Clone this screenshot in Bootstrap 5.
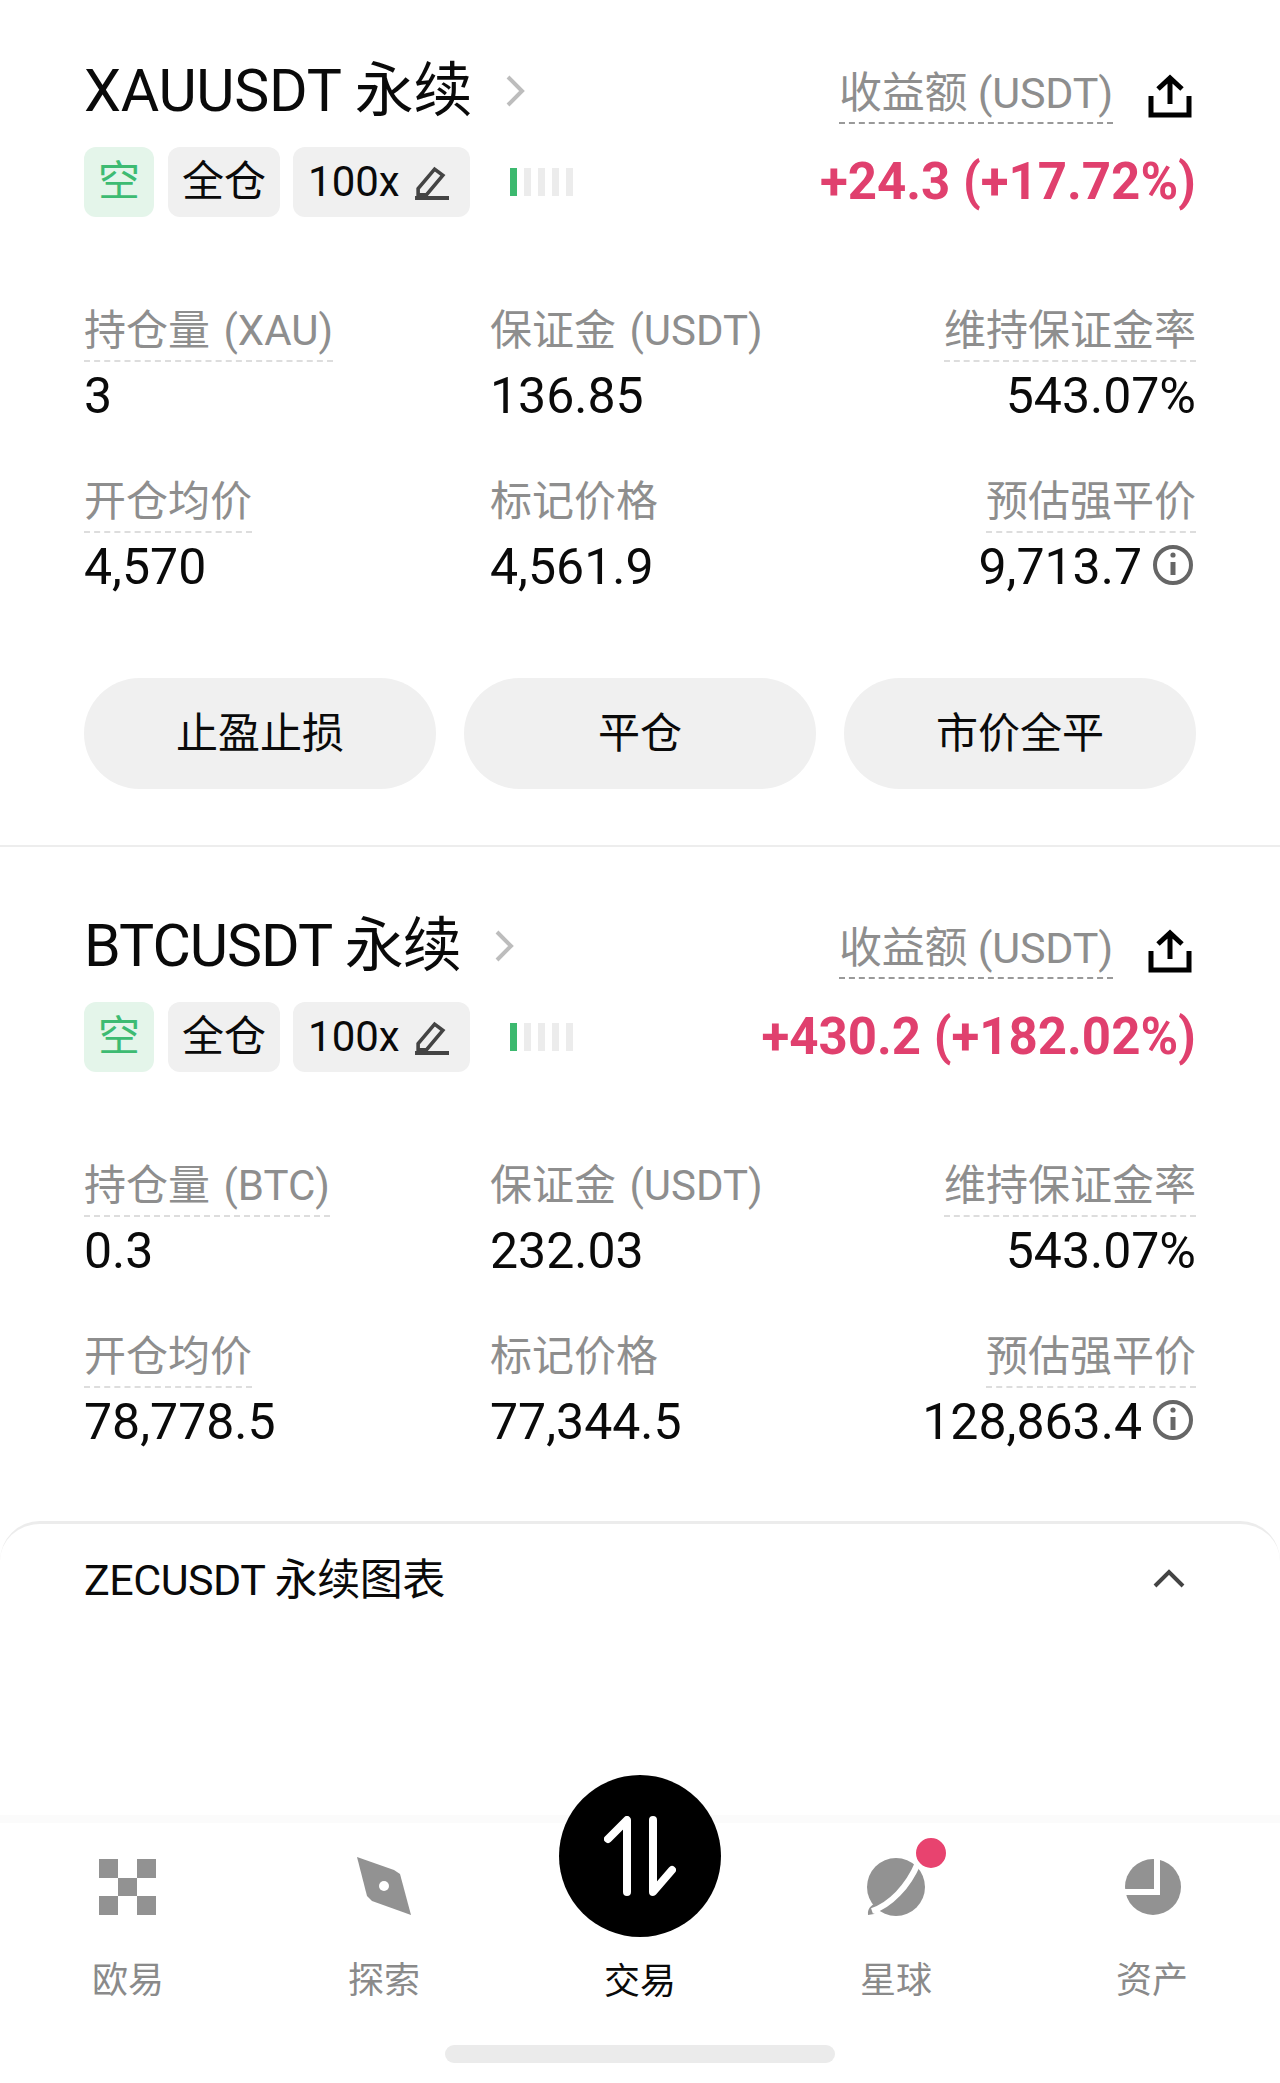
<!DOCTYPE html>
<html lang="zh-CN">
<head>
    <meta charset="UTF-8">
    <meta name="viewport" content="width=device-width, initial-scale=1.0">
    <title>持仓</title>
    <link href="https://cdn.jsdelivr.net/npm/bootstrap@5.3.0/dist/css/bootstrap.min.css" rel="stylesheet">
    <style>
        body { width: 1280px; height: 2083px; overflow: hidden; color: #0a0a0a; font-family: Roboto, "Noto Sans CJK SC", sans-serif; }
        .page { height: 2083px; }
        .pos-section { padding: 0 84px; }
        .pos-first { padding-top: 57px; height: 847px; border-bottom: 2px solid #ededed; }
        .pos-second { padding-top: 65px; height: 674px; }
        .pos-second .pos-title { letter-spacing: -1px; }
        .pos-head { height: 68px; }
        .pos-title { font-size: 59px; line-height: 68px; margin: 0; font-weight: 400; letter-spacing: -.3px; }
        .pos-arrow { width: 20px; height: 34px; margin-left: 33px; }
        .pnl-label { font-size: 43px; line-height: 52px; color: #8e8e8e; border-bottom: 2px dashed #999; height: 57px; margin-top: 10px; letter-spacing: -.2px; }
        .share-icon { width: 44px; height: 44px; margin-top: 17px; margin-left: 35px; margin-right: 4px; }
        .chip-row { margin-top: 22px; height: 70px; }
        .chip { height: 70px; border-radius: 12px; background: #f0f0f0; font-size: 42px; line-height: 70px; padding: 0 14px; margin-right: 13px; }
        .chip-short { background: #e4f5ea; color: #3dbb72; margin-right: 14px; }
        .chip-lev { padding-left: 15px; padding-right: 21px; }
        .pen-icon { width: 35px; height: 35px; margin-left: 14px; }
        .lev-bars { margin-left: 27px; gap: 7px; }
        .lev-bars i { display: block; width: 7px; height: 28px; background: #ececec; }
        .lev-bars i:first-child { background: #3cb96f; }
        .pnl-value { font-size: 51px; line-height: 70px; font-weight: 700; color: #e0406e; }
        .stat-grid { display: grid; grid-template-columns: 406px 1fr auto; margin-top: 89px; row-gap: 50px; }
        .stat-label, .stat-label-plain { display: inline-block; font-size: 42px; line-height: 50px; height: 56px; color: #8e8e8e; word-spacing: 3px; }
        .stat-label { border-bottom: 2px dashed #ddd; }
        .stat-value { font-size: 50px; line-height: 62px; margin-top: 3px; }
        .info-icon { width: 42px; height: 42px; margin-left: 10px; vertical-align: -2px; margin-right: 2px; }
        .action-row { margin-top: 80px; gap: 28px; }
        .action-btn { flex: 1; height: 111px; border-radius: 56px; background: #f0f0f0; border: 0; font-size: 42px; color: #0a0a0a; }
        .chart-sheet { height: 294px; border-top: 3px solid #ececec; border-radius: 40px 40px 0 0; padding: 28px 84px 0; }
        .chart-title { font-size: 43px; line-height: 56px; margin: 0; font-weight: 400; letter-spacing: -.5px; }
        .chart-chevron { width: 34px; height: 20px; margin-right: 10px; }
        .tab-bar { height: 267px; border-top: 8px solid #fbfbfb; padding-top: 33px; }
        .tab-item { width: 256px; height: 154px; padding-top: 1px; color: #8a8a8a; font-size: 36px; line-height: 44px; }
        .tab-item svg { width: 60px; height: 60px; margin-bottom: 42px; display: block; }
        .tab-item .planet { overflow: visible; }
        .tab-active { color: #0a0a0a; justify-content: flex-end; height: 148px; }
        .trade-fab { position: absolute; left: 559px; top: 1775px; width: 162px; height: 162px; border-radius: 50%; background: #000; }
        .home-bar { position: absolute; left: 445px; top: 2045px; width: 390px; height: 18px; border-radius: 9px; background: #ebebeb; }
    </style>
</head>
<body>
    <div class="page d-flex flex-column position-relative">
        <div id="positions"></div>

        <div class="chart-sheet d-flex justify-content-between align-items-start">
            <h2 class="chart-title">ZECUSDT 永续图表</h2>
            <svg class="chart-chevron mt-3" viewBox="0 0 34 20" fill="none" stroke="#444" stroke-width="4"><path d="M3 18 17 4l14 14"/></svg>
        </div>

        <nav class="tab-bar d-flex justify-content-center">
            <div class="tab-item d-flex flex-column align-items-center">
                <svg viewBox="0 0 60 60" fill="#929292"><path d="M1 2h19v19H1zM39 2h19v19H39zM20 21h19v18H20zM1 39h19v19H1zM39 39h19v19H39z"/></svg>
                <span>欧易</span>
            </div>
            <div class="tab-item d-flex flex-column align-items-center">
                <svg viewBox="0 0 60 60"><path fill="#929292" d="M3 0 40 13 46 17 57 58 18 44 13 39Z"/><circle cx="30" cy="29" r="5" fill="#fff"/></svg>
                <span>探索</span>
            </div>
            <div class="tab-item tab-active d-flex flex-column align-items-center"><span>交易</span></div>
            <div class="tab-item d-flex flex-column align-items-center">
                <svg class="planet" viewBox="0 0 60 60">
                    <circle cx="30" cy="30" r="29" fill="#929292"/>
                    <path d="M2 58C1 50 7 48 12 44l-4 13Z" fill="#929292"/>
                    <path d="M6 54C24 48 42 30 52 6" fill="none" stroke="#fff" stroke-width="6"/>
                    <circle cx="65" cy="-4" r="16" fill="#e8436f" stroke="#fff" stroke-width="2"/>
                </svg>
                <span>星球</span>
            </div>
            <div class="tab-item d-flex flex-column align-items-center">
                <svg viewBox="0 0 60 60"><circle cx="31" cy="30" r="28" fill="#929292"/><path d="M0 35h35V0" fill="none" stroke="#fff" stroke-width="6"/></svg>
                <span>资产</span>
            </div>
        </nav>

        <div class="trade-fab d-flex align-items-center justify-content-center">
            <svg width="72" height="80" viewBox="0 0 72 80" fill="none" stroke="#fff" stroke-width="8" stroke-linecap="round" stroke-linejoin="round">
                <path d="M4 23 23 4v72M49 4v72l19-22"/>
            </svg>
        </div>
        <div class="home-bar"></div>
    </div>

    <script>
        const positions = [
            { symbol: 'XAUUSDT', base: 'XAU', pnl: '+24.3 (+17.72%)', size: '3', margin: '136.85', entry: '4,570', mark: '4,561.9', liq: '9,713.7', cls: 'pos-first', actions: true },
            { symbol: 'BTCUSDT', base: 'BTC', pnl: '+430.2 (+182.02%)', size: '0.3', margin: '232.03', entry: '78,778.5', mark: '77,344.5', liq: '128,863.4', cls: 'pos-second', actions: false },
        ];

        // Una sección por posición
        document.getElementById('positions').innerHTML = positions.map(p => `
            <section class="pos-section ${p.cls}">
                <div class="pos-head d-flex align-items-start justify-content-between">
                    <div class="d-flex align-items-center">
                        <h2 class="pos-title">${p.symbol} 永续</h2>
                        <svg class="pos-arrow" viewBox="0 0 20 34" fill="none" stroke="#bdbdbd" stroke-width="4"><path d="M3 3 17 17 3 31"/></svg>
                    </div>
                    <div class="d-flex align-items-start">
                        <span class="pnl-label">收益额 (USDT)</span>
                        <svg class="share-icon" viewBox="0 0 44 44" fill="none" stroke="#000" stroke-width="5"><path d="M22 30V5M10 15 22 4l12 11M3 22v19h38V22"/></svg>
                    </div>
                </div>
                <div class="chip-row d-flex align-items-center">
                    <span class="chip chip-short">空</span>
                    <span class="chip">全仓</span>
                    <span class="chip chip-lev d-flex align-items-center">100x<svg class="pen-icon" viewBox="0 0 34 34" fill="none" stroke="#444" stroke-width="3.5"><path d="M4 23 20 4l8 6-16 19H4Z"/><path d="M1 32h33" stroke-width="4"/></svg></span>
                    <span class="lev-bars d-flex"><i></i><i></i><i></i><i></i><i></i></span>
                    <span class="pnl-value ms-auto">${p.pnl}</span>
                </div>
                <div class="stat-grid">
                    <div><span class="stat-label">持仓量 (${p.base})</span><div class="stat-value">${p.size}</div></div>
                    <div><span class="stat-label-plain">保证金 (USDT)</span><div class="stat-value">${p.margin}</div></div>
                    <div class="text-end"><span class="stat-label">维持保证金率</span><div class="stat-value">543.07%</div></div>
                    <div><span class="stat-label">开仓均价</span><div class="stat-value">${p.entry}</div></div>
                    <div><span class="stat-label-plain">标记价格</span><div class="stat-value">${p.mark}</div></div>
                    <div class="text-end"><span class="stat-label">预估强平价</span>
                        <div class="stat-value">${p.liq}<svg class="info-icon" viewBox="0 0 42 42" fill="none" stroke="#666" stroke-width="4"><circle cx="21" cy="21" r="18"/><path d="M21 18v13" stroke-width="5"/><circle cx="21" cy="11" r="2.6" fill="#666" stroke="none"/></svg></div>
                    </div>
                </div>
                ${p.actions ? `<div class="action-row d-flex">
                    <button class="btn action-btn">止盈止损</button>
                    <button class="btn action-btn">平仓</button>
                    <button class="btn action-btn">市价全平</button>
                </div>` : ''}
            </section>`).join('');
    </script>
    <script src="https://cdn.jsdelivr.net/npm/bootstrap@5.3.0/dist/js/bootstrap.bundle.min.js"></script>
</body>
</html>
